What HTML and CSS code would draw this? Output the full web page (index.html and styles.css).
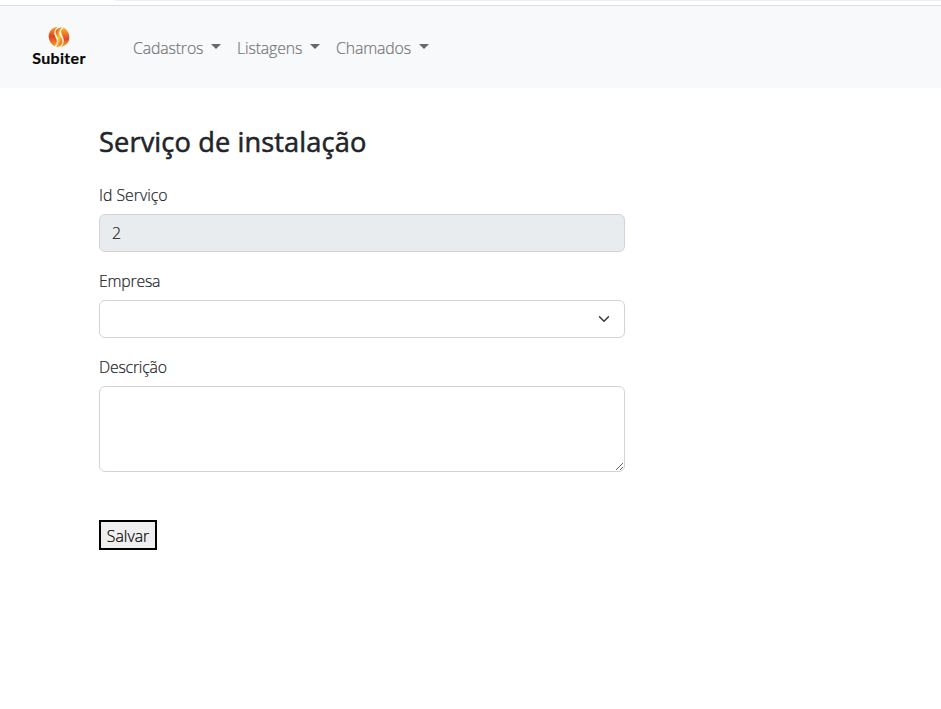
FILE: index.html
```html
<!DOCTYPE html>
<html lang="pt-BR">
<head>
<meta charset="utf-8">
<title>Serviço de instalação</title>
<link rel="stylesheet" href="styles.css">
</head>
<body>
<div class="top-edge"></div>
<nav class="navbar">
  <a class="brand">
    <svg class="brand-mark" viewBox="0 0 22 22" width="22" height="22">
      <defs>
        <linearGradient id="left" x1="0" y1="0" x2="0" y2="1"><stop offset="0" stop-color="#f7a823"/><stop offset=".5" stop-color="#df4125"/><stop offset="1" stop-color="#f0a02a"/></linearGradient>
        <linearGradient id="mid" x1="0" y1="0" x2="1" y2="1"><stop offset="0" stop-color="#d9431f"/><stop offset=".5" stop-color="#f9c72c"/><stop offset="1" stop-color="#dc4723"/></linearGradient>
        <linearGradient id="right" x1="0" y1="0" x2="0" y2="1"><stop offset="0" stop-color="#f8b42a"/><stop offset=".6" stop-color="#e2472a"/><stop offset="1" stop-color="#f7bb2c"/></linearGradient>
      </defs>
      <path fill="url(#left)" d="M9.500.7C3.700 1.400.5 5.800.7 10.800c.2 4.200 2.500 7.700 6.100 9.400 2.700-1.500 3.400-4.400 1.800-7.200C6.500 9.400 4.900 5.500 9.500.7z"/>
      <path fill="url(#mid)" d="M14.800 1.300C9.500 1.200 6.300 4.600 8 8.200c1.400 3 3.300 5.400 1.700 9.600-.4 1.200-1 2.100-1.900 3 4 .5 6.700-1.900 6.700-5.500 0-3.700-3.700-5.500-3.100-9.200.3-2 1.500-3.500 3.400-4.800z"/>
      <path fill="url(#right)" d="M15.700 1.800c-2.500 1.300-3.300 3.600-2.100 6.100 1.700 3.700 4 7.800-.9 13.100 5.300-.8 8.800-5 8.600-10.300-.2-3.900-2.300-7.200-5.600-8.900z"/>
      <path d="M15.200 2.300c-5.100 2.700-2.700 6.600-1 9.700 1.500 2.900 1.100 5.800-1.300 8.300M7.100 19.600c3.400-4.200 2-6.600.3-10-1.500-3.300-.3-6.600 2.500-8.300" fill="none" stroke="#fff0b8" stroke-width=".7"/>
    </svg>
    <span class="brand-name">Subiter</span>
  </a>
  <ul class="menu">
    <li class="menu-item"><span class="t-cad">Cadastros</span><i class="caret"></i></li>
    <li class="menu-item"><span class="t-lis">Listagens</span><i class="caret"></i></li>
    <li class="menu-item"><span class="t-cha">Chamados</span><i class="caret"></i></li>
  </ul>
</nav>
<main class="content">
  <h1 class="title">Serviço de instalação</h1>
  <form>
    <div class="field">
      <label class="label label-id" for="id">Id Serviço</label>
      <input class="control readonly" id="id" value="2" readonly>
    </div>
    <div class="field">
      <label class="label" for="empresa">Empresa</label>
      <div class="control select" id="empresa">
        <svg viewBox="0 0 16 16" width="16" height="12"><path d="m2 5 6 6 6-6" fill="none" stroke="#343a40" stroke-width="2" stroke-linecap="round" stroke-linejoin="round"/></svg>
      </div>
    </div>
    <div class="field">
      <label class="label" for="descricao">Descrição</label>
      <textarea class="control area" id="descricao"></textarea>
    </div>
    <button class="save" type="button">Salvar</button>
  </form>
</main>
</body>
</html>
```
FILE: styles.css
```css
* { box-sizing: border-box; }
body {
  margin: 0;
  height: 709px;
  overflow: hidden;
  background: #fff;
  color: #212529;
  font: 300 15.8px/24px "Open Sans", "Noto Sans", sans-serif;
  -webkit-text-stroke: .2px currentColor;
}
.top-edge {
  height: 6px;
  border-bottom: 1px solid #dcdddf;
  background: linear-gradient(#f0f0f0, #f0f0f0) 115px 0 / 826px 1px no-repeat;
}
.navbar {
  display: flex;
  height: 82px;
  padding-left: 31px;
  background: #f8f9fa;
}
.brand {
  display: flex;
  flex-direction: column;
  align-items: center;
  width: 56px;
  padding-top: 20px;
}
.brand-mark { display: block; }
.brand-name {
  color: #080808;
  font: 700 16px/20px Lato, sans-serif;
  letter-spacing: .3px;
}
.menu {
  display: grid;
  grid-template-columns: 104px 99px 100px;
  align-items: center;
  margin: 0 0 0 46px;
  padding: 0;
  list-style: none;
  color: #747678;
  letter-spacing: -.12px;
}
.menu-item { display: flex; align-items: center; height: 24px; }
.menu-item span { padding-top: 1px; }
.caret {
  margin: -2px 0 0 8px;
  border: 5px solid transparent;
  border-top-color: #66686a;
  border-bottom: 0;
}
.t-cad { width: 70px; }
.t-lis { width: 65px; }
.t-cha { width: 75px; }
.content { width: 625px; padding: 37px 0 0 99px; }
.title {
  margin: 0 0 23px;
  font-size: 27.2px;
  font-weight: 400;
  line-height: 34px;
  letter-spacing: .12px;
  white-space: nowrap;
  -webkit-text-stroke: .55px currentColor;
}
.field { margin-bottom: 16px; }
.label {
  display: block;
  height: 24px;
  margin-bottom: 8px;
  padding-top: 1px;
  letter-spacing: -.2px;
}
.label-id { letter-spacing: 0; }
.control {
  display: block;
  width: 526px;
  height: 38px;
  padding: 6px 12px;
  border: 1px solid #ced4da;
  border-radius: 6px;
  background: #fff;
  color: #212529;
  font: inherit;
  outline: 0;
}
.readonly { background: #e9ecef; }
.select { display: flex; align-items: center; justify-content: flex-end; }
.area { height: 86px; resize: vertical; }
.save {
  display: block;
  width: 58px;
  height: 30px;
  margin-top: 48px;
  padding: 1px 0 0;
  border: 2px solid #000;
  background: #efefef;
  color: #000;
  font: inherit;
  line-height: 24px;
}
```
